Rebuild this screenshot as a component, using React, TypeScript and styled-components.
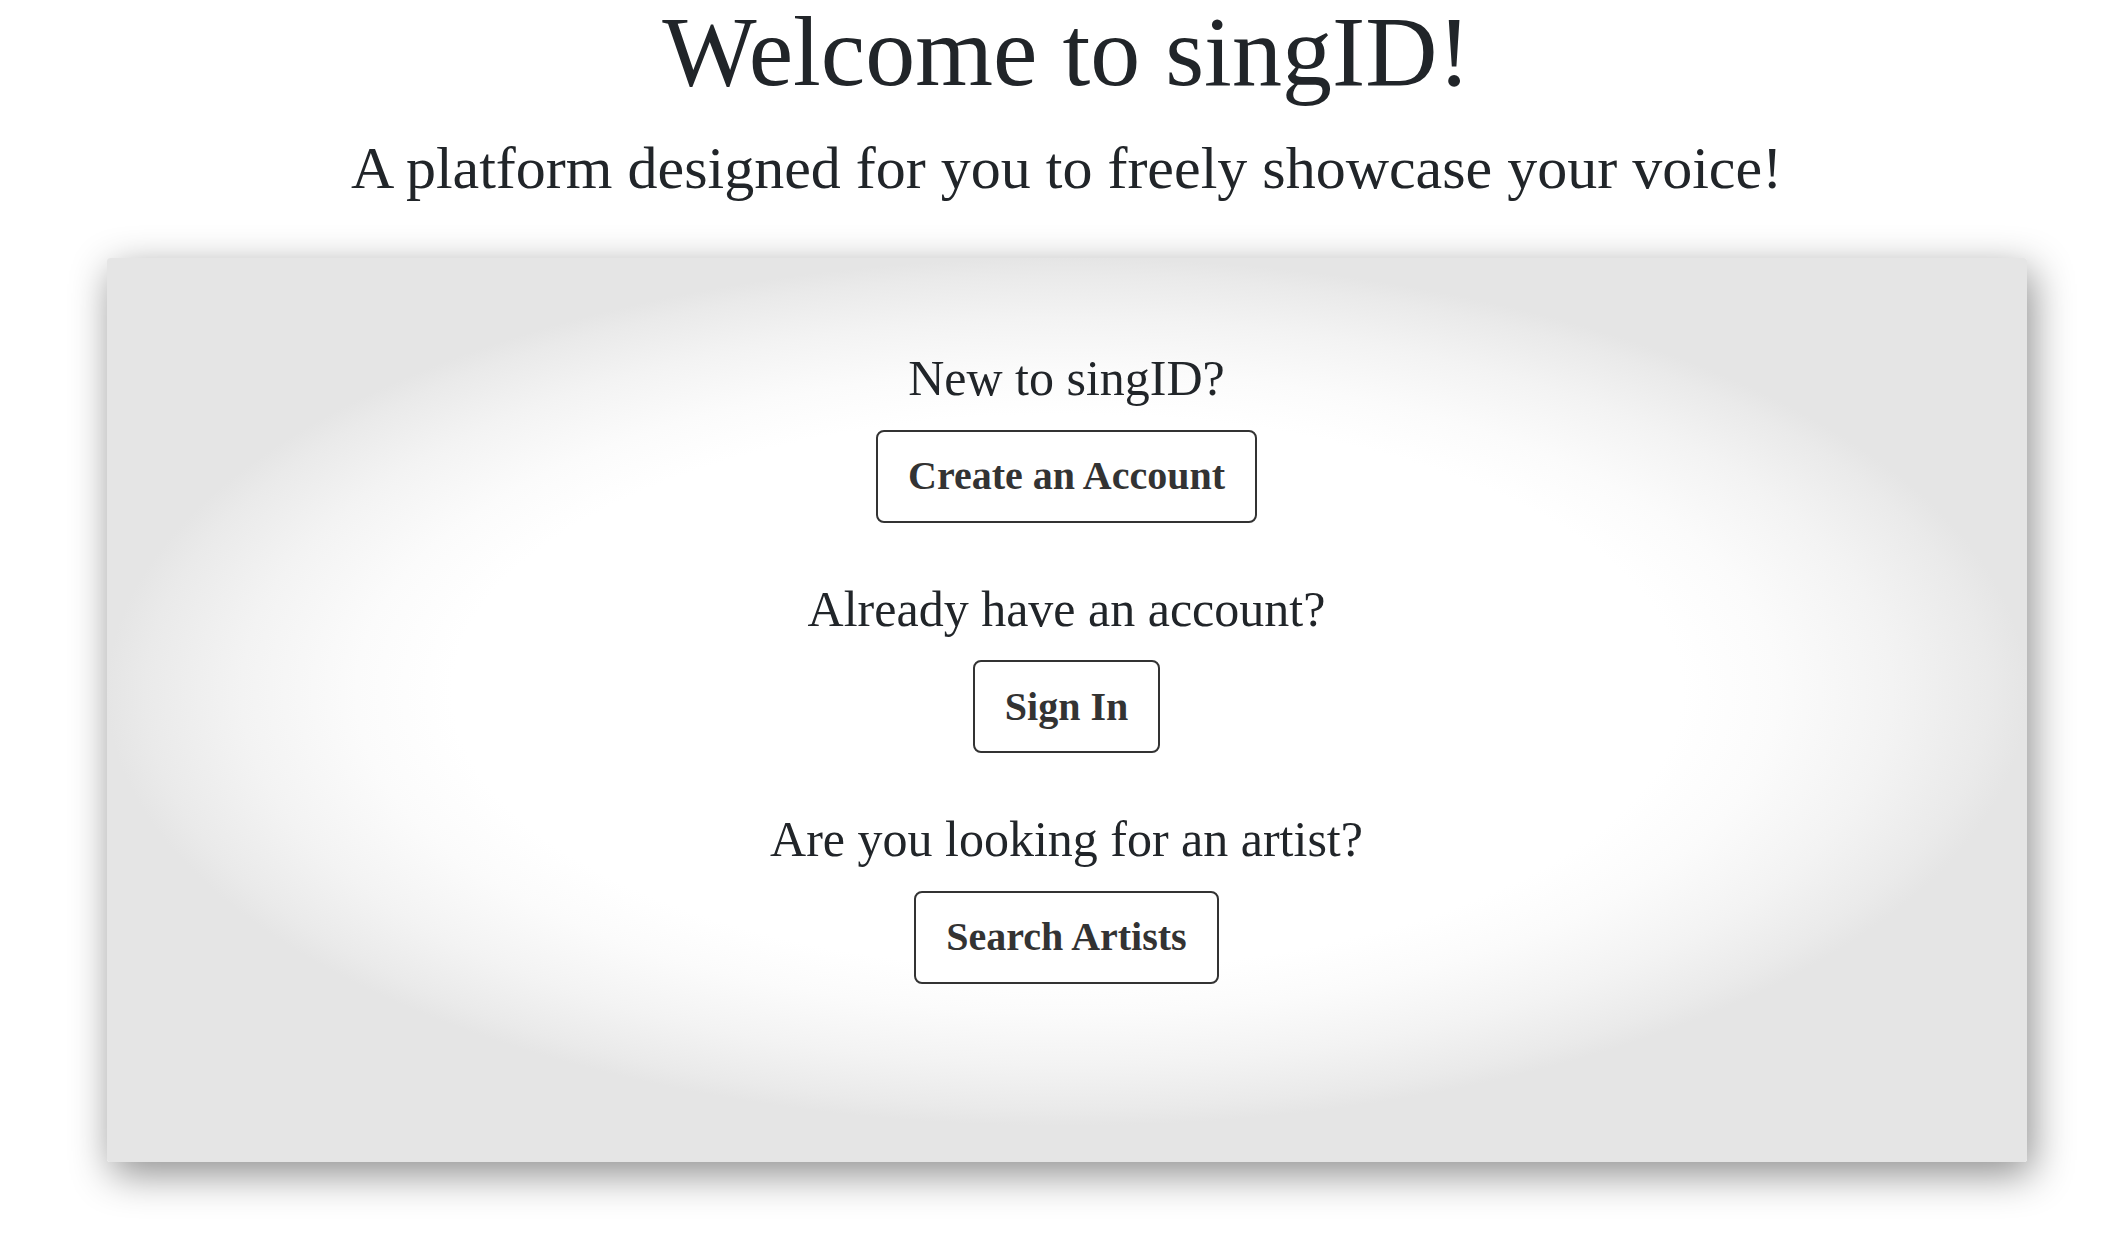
import styled, { createGlobalStyle } from "styled-components";
import { FC } from "react";

const GlobalStyle = createGlobalStyle`
  html, body {
    margin: 0;
    padding: 0;
    background: #ffffff;
  }
  body {
    font-family: "Liberation Serif", "Times New Roman", serif;
    color: #212529;
  }
`;

const Page = styled.main`
  display: flex;
  flex-direction: column;
  align-items: center;
  padding: 2px 0 80px 8px;
`;

const Title = styled.h1`
  margin: 0;
  font-size: 100px;
  font-weight: 400;
  line-height: 100px;
  text-align: center;
`;

const SubTitle = styled.h3`
  margin: 30px 0 0;
  font-size: 60px;
  font-weight: 400;
  line-height: 72px;
  text-align: center;
`;

const Card = styled.section`
  box-sizing: border-box;
  width: 1920px;
  height: 904px;
  margin-top: 54px;
  padding-top: 92px;
  display: flex;
  flex-direction: column;
  align-items: center;
  border-radius: 3px;
  background: radial-gradient(
    ellipse closest-side at 50% 48%,
    #ffffff 64%,
    #fbfbfb 74%,
    #f3f3f3 86%,
    #eaeaea 96%,
    #e5e5e5 100%
  );
  box-shadow: 5px 12px 40px rgba(0, 0, 0, 0.45);
`;

const Option = styled.div`
  display: flex;
  flex-direction: column;
  align-items: center;
  margin-bottom: 58px;
`;

const Question = styled.p`
  margin: 0 0 22px;
  font-size: 50px;
  line-height: 57.5px;
  color: #212529;
`;

const ActionButton = styled.button`
  font-family: "Liberation Serif", "Times New Roman", serif;
  font-size: 40px;
  font-weight: 700;
  line-height: 46px;
  color: #333333;
  background: #ffffff;
  border: 2px solid #333333;
  border-radius: 8px;
  padding: 21.5px 30px;
  cursor: pointer;
`;

const options = [
  { question: "New to singID?", action: "Create an Account" },
  { question: "Already have an account?", action: "Sign In" },
  { question: "Are you looking for an artist?", action: "Search Artists" },
];

const App: FC = () => {
  return (
    <>
      <GlobalStyle />
      <Page>
        <Title>Welcome to singID!</Title>
        <SubTitle>A platform designed for you to freely showcase your voice!</SubTitle>
        <Card>
          {options.map((o) => (
            <Option key={o.action}>
              <Question>{o.question}</Question>
              <ActionButton>{o.action}</ActionButton>
            </Option>
          ))}
        </Card>
      </Page>
    </>
  );
};

export default App;
